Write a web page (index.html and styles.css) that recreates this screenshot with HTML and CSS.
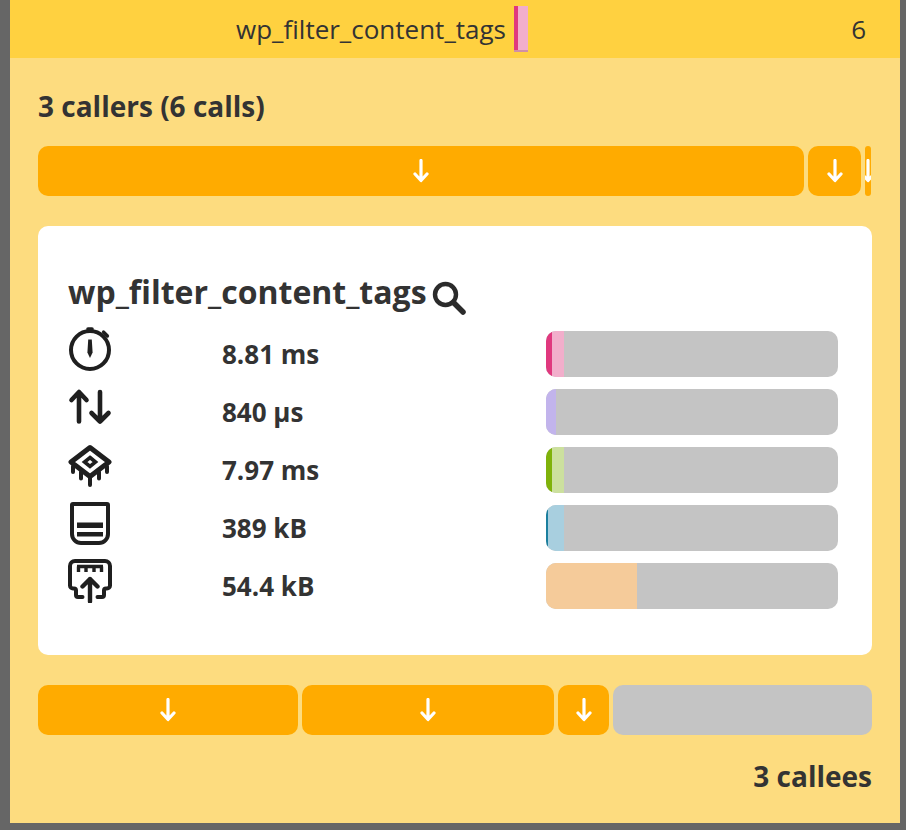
FILE: index.html
```html
<!DOCTYPE html>
<html lang="en">
<head>
<meta charset="utf-8">
<title>wp_filter_content_tags</title>
<link rel="stylesheet" href="styles.css">
</head>
<body>
<svg class="defs" width="0" height="0" aria-hidden="true">
  <symbol id="down" viewBox="0 0 16 24"><path d="M8 1.500V21M2 15l6 6.500 6-6.500" fill="none" stroke="#fff" stroke-width="3.200" stroke-linecap="round" stroke-linejoin="round"/></symbol>
</svg>
<main class="panel">
  <header class="top">
    <span class="top-name">wp_filter_content_tags</span>
    <span class="top-bar"><span class="top-bar-dark"></span></span>
    <span class="top-count">6</span>
  </header>
  <div class="body">
    <h2 class="callers-title">3 callers (6 calls)</h2>
    <div class="splits">
      <div class="seg seg-c1"><svg class="arrow"><use href="#down"/></svg></div>
      <div class="seg seg-c2"><svg class="arrow"><use href="#down"/></svg></div>
      <div class="seg seg-c3"><svg class="arrow"><use href="#down"/></svg></div>
    </div>
    <section class="card">
      <h1 class="card-title">wp_filter_content_tags<svg class="search" viewBox="0 0 34 34"><circle cx="13.500" cy="13.500" r="10.500" fill="none" stroke="#2b2b2b" stroke-width="4.400"/><path d="M21.500 21.500l9.500 9.500" stroke="#2b2b2b" stroke-width="5.500" stroke-linecap="round"/></svg></h1>
      <div class="metric">
        <svg class="icon" viewBox="0 0 44 44"><circle cx="22" cy="23" r="19" fill="none" stroke="#1f1f1f" stroke-width="4"/><path d="M20 2h4" stroke="#1f1f1f" stroke-width="3.600" stroke-linecap="round"/><path d="M35.500 5l4 4" stroke="#1f1f1f" stroke-width="3.200" stroke-linecap="round"/><path d="M20.200 12.500h3.600l.8 13-2.600 5.500-2.600-5.500z" fill="#1f1f1f"/></svg>
        <span class="value">8.81 ms</span>
        <div class="meter"><span class="fill pink-d w-6"></span><span class="fill pink-l w-11"></span></div>
      </div>
      <div class="metric">
        <svg class="icon" viewBox="0 0 44 44"><path d="M11 36.500V8M3.500 15L11 7l7.500 8M32 7v29.500M23.500 28l8.500 8.500 8.500-8.500" fill="none" stroke="#1f1f1f" stroke-width="4.600" stroke-linecap="round" stroke-linejoin="round"/></svg>
        <span class="value">840 µs</span>
        <div class="meter"><span class="fill lav w-10"></span></div>
      </div>
      <div class="metric">
        <svg class="icon" viewBox="0 0 44 44"><path d="M22 4.500L41 19 22 33.500 3 19z" fill="none" stroke="#1f1f1f" stroke-width="5" stroke-linejoin="round"/><path d="M22 14.500l5.500 4.500-5.500 4.500-5.500-4.500z" fill="none" stroke="#1f1f1f" stroke-width="3.600"/><path d="M5 23.500v5.500M13 29v6.500M22 35v7M31 29v6.500M39 23.500v5.500" stroke="#1f1f1f" stroke-width="4" stroke-linecap="round"/></svg>
        <span class="value">7.97 ms</span>
        <div class="meter"><span class="fill green-d w-6"></span><span class="fill green-l w-12"></span></div>
      </div>
      <div class="metric">
        <svg class="icon" viewBox="0 0 44 44"><path d="M5 3h34a1 1 0 0 1 1 1V33a9 9 0 0 1-9 9H13a9 9 0 0 1-9-9V4a1 1 0 0 1 1-1z" fill="none" stroke="#1f1f1f" stroke-width="4"/><rect x="9" y="21.500" width="26" height="5.500" fill="#1f1f1f"/><rect x="9" y="31" width="26" height="4.500" fill="#1f1f1f"/></svg>
        <span class="value">389 kB</span>
        <div class="meter"><span class="fill teal-d w-2"></span><span class="fill teal-l w-16"></span></div>
      </div>
      <div class="metric">
        <svg class="icon" viewBox="0 0 44 44"><path d="M14.500 38H10a2 2 0 0 1-2-2v-4.500a2 2 0 0 0-2-2H5a3 3 0 0 1-3-3V7a5 5 0 0 1 5-5h30a5 5 0 0 1 5 5v19.500a3 3 0 0 1-3 3h-1a2 2 0 0 0-2 2V36a2 2 0 0 1-2 2h-4.500" fill="none" stroke="#1f1f1f" stroke-width="4" stroke-linejoin="round" stroke-linecap="round"/><path d="M9 7.500h26M10.500 7.500v5.500M18 7.500v5.500M26 7.500v5.500M33.500 7.500v5.500" fill="none" stroke="#1f1f1f" stroke-width="3.400"/><path d="M22 42.500V20M14.500 27.500L22 20l7.500 7.500" fill="none" stroke="#1f1f1f" stroke-width="4.400" stroke-linecap="round" stroke-linejoin="round"/></svg>
        <span class="value">54.4 kB</span>
        <div class="meter"><span class="fill peach w-91"></span></div>
      </div>
    </section>
    <div class="splits">
      <div class="seg seg-d1"><svg class="arrow"><use href="#down"/></svg></div>
      <div class="seg seg-d2"><svg class="arrow"><use href="#down"/></svg></div>
      <div class="seg seg-d3"><svg class="arrow"><use href="#down"/></svg></div>
      <div class="seg seg-rest"></div>
    </div>
    <h2 class="callees-title">3 callees</h2>
  </div>
</main>
</body>
</html>
```

FILE: styles.css
```css
* { box-sizing: border-box; }
html, body { margin: 0; height: 100%; }
body {
  background: #666;
  font-family: "Open Sans", "Liberation Sans", sans-serif;
  color: #333;
  overflow: hidden;
}
.defs { position: absolute; }
.panel {
  margin: 0 6px 0 10px;
  height: 823px;
  background: #fddc7f;
}
.top {
  height: 58px;
  background: #ffd140;
  display: flex;
  align-items: center;
  font-size: 26px;
}
.top-name { width: 496px; text-align: right; }
.top-bar {
  margin-left: 8px;
  width: 14px;
  height: 46px;
  background: #f2aecb;
  position: relative;
  overflow: hidden;
  border-bottom: 2px solid #d18fa6;
}
.top-bar-dark {
  display: block;
  width: 4px;
  height: 48px;
  background: #e0387e;
}
.top-count { margin-left: auto; padding-right: 34px; }
.body { padding: 28px 28px 0; }
.callers-title {
  margin: 0 0 20px;
  font-size: 28px;
  line-height: 40px;
  font-weight: 700;
}
.splits { display: flex; gap: 4px; height: 50px; }
.seg {
  display: flex;
  justify-content: center;
  align-items: center;
  background: #ffab00;
  border-radius: 10px;
  overflow: hidden;
}
.seg-c1 { width: 766px; }
.seg-c2 { width: 53px; }
.seg-c3 { width: 6px; border-radius: 3px; }
.seg-d1 { width: 260px; }
.seg-d2 { width: 252px; }
.seg-d3 { width: 51px; }
.seg-rest { width: 259px; background: #c4c4c4; }
.arrow { width: 16px; height: 24px; flex: none; }
.card {
  margin: 30px 0;
  height: 429px;
  background: #fff;
  border-radius: 10px;
  padding: 44px 34px 0 30px;
}
.card-title {
  margin: 0 0 9px;
  height: 52px;
  font-size: 32px;
  line-height: 44px;
  font-weight: 700;
  display: flex;
  align-items: flex-start;
  gap: 5px;
}
.search { width: 34px; height: 34px; margin-top: 11px; }
.metric {
  display: grid;
  grid-template-columns: 154px 324px 292px;
  height: 46px;
  margin-bottom: 12px;
  align-items: center;
}
.icon { width: 44px; height: 44px; align-self: start; margin-top: -4px; }
.value { font-size: 26px; font-weight: 700; }
.meter {
  display: flex;
  height: 46px;
  background: #c4c4c4;
  border-radius: 10px;
  overflow: hidden;
}
.fill { display: block; height: 100%; }
.w-2 { width: 2px; }
.w-6 { width: 6px; }
.w-10 { width: 10px; }
.w-11 { width: 11.500px; }
.w-12 { width: 12px; }
.w-16 { width: 16px; }
.w-91 { width: 91px; }
.pink-d { background: #e0387e; }
.pink-l { background: #f2aecb; }
.lav { background: #c2b4ec; }
.green-d { background: #7fb20a; }
.green-l { background: #cce09e; }
.teal-d { background: #1b7f9e; }
.teal-l { background: #a8cfdf; }
.peach { background: #f5cb9a; }
.callees-title {
  margin: 21px 0 0;
  font-size: 28px;
  line-height: 40px;
  font-weight: 700;
  text-align: right;
}
```
